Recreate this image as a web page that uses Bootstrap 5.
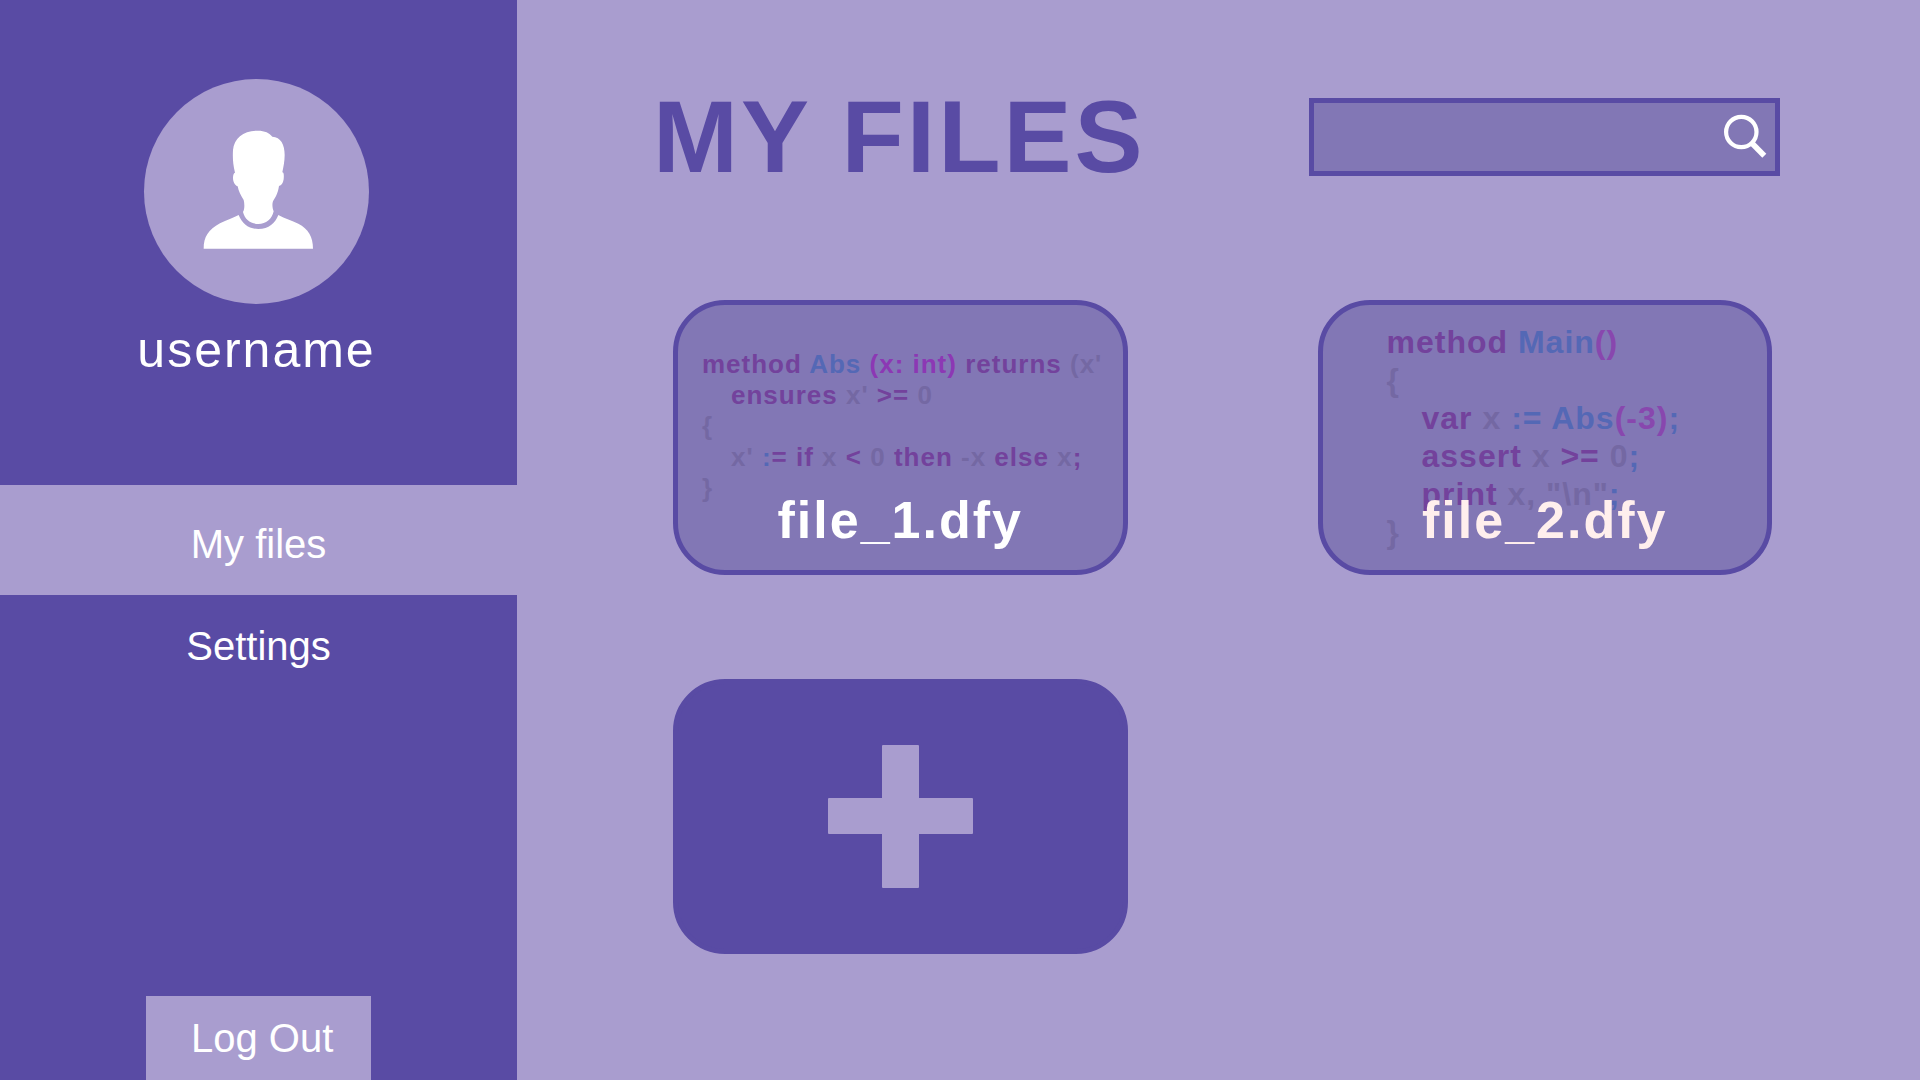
<!DOCTYPE html>
<html lang="en">
<head>
<meta charset="utf-8">
<meta name="viewport" content="width=device-width, initial-scale=1">
<title>My files</title>
<link href="https://cdn.jsdelivr.net/npm/bootstrap@5.3.0/dist/css/bootstrap.min.css" rel="stylesheet">
<style>
  :root { --deep: #594ba4; --soft: #a99dcf; --mid: #8277b5; }
  body { background: var(--soft); font-family: "Liberation Sans", Arial, sans-serif; }

  /* Sidebar */
  .side { flex: 0 0 517px; background: var(--deep); padding-top: 79px; }
  .avatar { width: 225px; height: 225px; background: var(--soft); }
  .user-name { font-size: 50px; line-height: 60px; letter-spacing: 2px; margin: 16px 0 105px; }
  .side-link { font-size: 40px; line-height: 102px; }
  .side-link.active { background: var(--soft); }
  .logout { width: 225px; padding: 0 0 0 45px; font-size: 40px; line-height: 84px; background: var(--soft); }

  /* Header */
  .page { padding: 77px 140px 48px 136px; min-width: 0; }
  .page-title { font-size: 102px; line-height: 120px; letter-spacing: 3px; color: var(--deep); }
  .search { flex: 0 1 471px; min-width: 0; border: 5px solid var(--deep); background: var(--mid); }
  .search input { width: 0; height: 68px; font-size: 32px; }
  .search button { padding-right: 8px; }

  /* File tiles */
  .tiles { display: grid; grid-template-columns: 1fr 1fr; gap: 104px 190px; margin-top: 103px; padding: 0 8px 0 20px; }
  .tile { min-height: 275px; border: 5px solid var(--deep); border-radius: 52px; background: var(--mid); overflow: hidden; }
  .tile > * { grid-area: 1 / 1; }
  .tile-name { font-size: 52px; line-height: 60px; letter-spacing: 2px; padding-bottom: 20px; }
  .tile-name.warm { color: #ffefed; }
  .tile-add { background: var(--deep); }
  .source { white-space: nowrap; letter-spacing: 1px; color: #7468a3; }
  .source-wide { font-size: 26px; line-height: 31px; padding: 44px 0 0 24px; --indent: 29px; }
  .source-tall { font-size: 32px; line-height: 38px; padding: 18px 0 0 64px; --indent: 35px; }
  .indent { padding-left: var(--indent); }
  .kw { color: #73429c; }
  .fn { color: #5468b5; }
  .arg { color: #8c38b4; }
  .val { color: #8847ae; }
</style>
<script src="https://cdn.jsdelivr.net/npm/bootstrap@5.3.0/dist/js/bootstrap.bundle.min.js" defer></script>
</head>
<body>
<div class="d-flex min-vh-100">
  <aside class="side d-flex flex-column align-items-center text-white">
    <div class="d-flex flex-column align-items-center pe-1">
      <svg class="avatar rounded-circle" viewBox="72 57 675 675" fill="#fff" aria-hidden="true">
        <path d="M345 338C338 310 338 290 339 270C342 235 370 212 410 212C432 211 448 218 457 230C482 232 494 252 494 285C494 305 490 322 487 337C492 338 492 345 491 358C489 370 484 377 477 378C474 400 466 412 459 424C456 432 457 445 461 454C456 478 438 492 415 492C392 492 374 478 369 456C374 448 374 432 371 420C362 405 356 395 353 379C346 377 339 367 339 354C339 345 341 339 345 338Z"/>
        <path d="M251 566C251 530 265 510 300 490C320 480 340 473 356 465C366 490 385 507 415 507C447 507 465 490 475 465C495 476 515 481 535 491C565 507 579 530 579 566Z"/>
      </svg>
      <div class="user-name">username</div>
    </div>
    <nav class="w-100 d-flex flex-column text-center">
      <a class="side-link active pt-2 text-white text-decoration-none" href="#files" aria-current="page">My files</a>
      <a class="side-link text-white text-decoration-none" href="#settings">Settings</a>
    </nav>
    <button class="logout mt-auto border-0 text-white text-start" type="button">Log Out</button>
  </aside>

  <main class="page flex-grow-1">
    <header class="d-flex justify-content-between align-items-center">
      <h1 class="page-title fw-bold text-nowrap mb-0">MY FILES</h1>
      <form class="search d-flex align-items-center" role="search">
        <input class="flex-grow-1 border-0 bg-transparent text-white px-3" type="search" aria-label="Search files">
        <button class="border-0 bg-transparent py-0 ps-0 d-flex" type="button" aria-label="Search">
          <svg width="44" height="46" viewBox="0 0 44 46" fill="none" stroke="#fff" aria-hidden="true">
            <circle cx="18.3" cy="18" r="15.2" stroke-width="4.2"/>
            <path d="M28.5 28.8L41.3 41.8" stroke-width="5.6"/>
          </svg>
        </button>
      </form>
    </header>

    <section class="tiles" aria-label="Files">
      <a class="tile d-grid text-decoration-none" href="#file_1">
        <div class="source source-wide fw-bold">
          <div><span class="kw">method</span> <span class="fn">Abs</span> <span class="arg">(x: int)</span> <span class="kw">returns</span> (x'</div>
          <div class="indent"><span class="kw">ensures</span> x' <span class="kw">&gt;=</span> 0</div>
          <div>{</div>
          <div class="indent">x' <span class="fn">:</span><span class="kw">=</span> <span class="kw">if</span> x <span class="kw">&lt;</span> 0 <span class="kw">then</span> -x <span class="kw">else</span> x<span class="kw">;</span></div>
          <div>}</div>
        </div>
        <div class="tile-name fw-bold text-white text-center align-self-end">file_1.dfy</div>
      </a>

      <a class="tile d-grid text-decoration-none" href="#file_2">
        <div class="source source-tall fw-bold">
          <div><span class="kw">method</span> <span class="fn">Main</span><span class="val">()</span></div>
          <div>{</div>
          <div class="indent"><span class="kw">var</span> x <span class="fn">:= Abs</span><span class="val">(-3)</span><span class="fn">;</span></div>
          <div class="indent"><span class="kw">assert</span> x <span class="kw">&gt;=</span> 0<span class="fn">;</span></div>
          <div class="indent"><span class="kw">print</span> x, "\n"<span class="fn">;</span></div>
          <div>}</div>
        </div>
        <div class="tile-name warm fw-bold text-center align-self-end">file_2.dfy</div>
      </a>

      <button class="tile tile-add d-flex align-items-center justify-content-center" type="button" aria-label="Add file">
        <svg width="145" height="143" viewBox="0 0 145 143" fill="#a99dcf" aria-hidden="true">
          <rect x="54" width="37" height="143" rx="1"/>
          <rect y="53" width="145" height="36" rx="1"/>
        </svg>
      </button>
    </section>
  </main>
</div>
</body>
</html>
